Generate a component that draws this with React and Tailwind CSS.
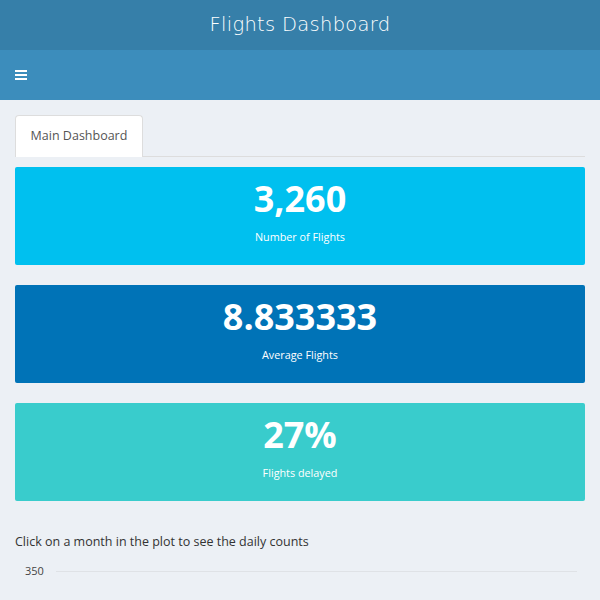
import React from "react";

function Box({ value, label, bg }) {
  return (
    <div className={`h-[98px] rounded-[2px] flex flex-col items-center text-white ${bg}`}>
      <div className="mt-[10px] text-[36px] font-bold leading-[44px]">{value}</div>
      <div className="mt-[9px] text-[10.8px] leading-[14px]">{label}</div>
    </div>
  );
}

export default function App() {
  return (
    <div className="w-[600px] h-[600px] overflow-hidden bg-[#ecf0f5]" style={{ fontFamily: '"Source Sans Pro", "Open Sans", "Liberation Sans", sans-serif' }}>
      <div className="h-[50px] bg-[#367fa9] flex items-center justify-center">
        <span className="text-white text-[19.5px] tracking-[0.3px]" style={{ fontFamily: '"DejaVu Sans", sans-serif', fontWeight: 200 }}>Flights Dashboard</span>
      </div>
      <div className="h-[50px] bg-[#3c8dbc] flex items-center px-[15px]">
        <svg width="12" height="10" viewBox="0 0 12 10">
          <rect x="0" y="0" width="12" height="2" fill="white" />
          <rect x="0" y="4" width="12" height="2" fill="white" />
          <rect x="0" y="8" width="12" height="2" fill="white" />
        </svg>
      </div>
      <div className="px-[15px] pt-[15px]">
        <div className="flex border-b border-[#ddd] h-[42px]">
          <div className="w-[128px] h-[42px] bg-white border border-[#ddd] border-b-0 rounded-t-[4px] flex items-center justify-center text-[12.5px] text-[#555]">
            Main Dashboard
          </div>
        </div>
        <div className="mt-[10px] flex flex-col gap-[20px]">
          <Box value="3,260" label="Number of Flights" bg="bg-[#00c0ef]" />
          <Box value="8.833333" label="Average Flights" bg="bg-[#0073b7]" />
          <Box value="27%" label="Flights delayed" bg="bg-[#39cccc]" />
        </div>
        <div className="mt-[32px] text-[12.5px] text-[#333] leading-[18px]">Click on a month in the plot to see the daily counts</div>
        <div className="mt-[12px] flex items-center">
          <span className="w-[41px] pl-[10px] text-[11px] text-[#444]">350</span>
          <div className="flex-1 mr-[8px] h-px bg-[#dfe2e6]" />
        </div>
      </div>
    </div>
  );
}
